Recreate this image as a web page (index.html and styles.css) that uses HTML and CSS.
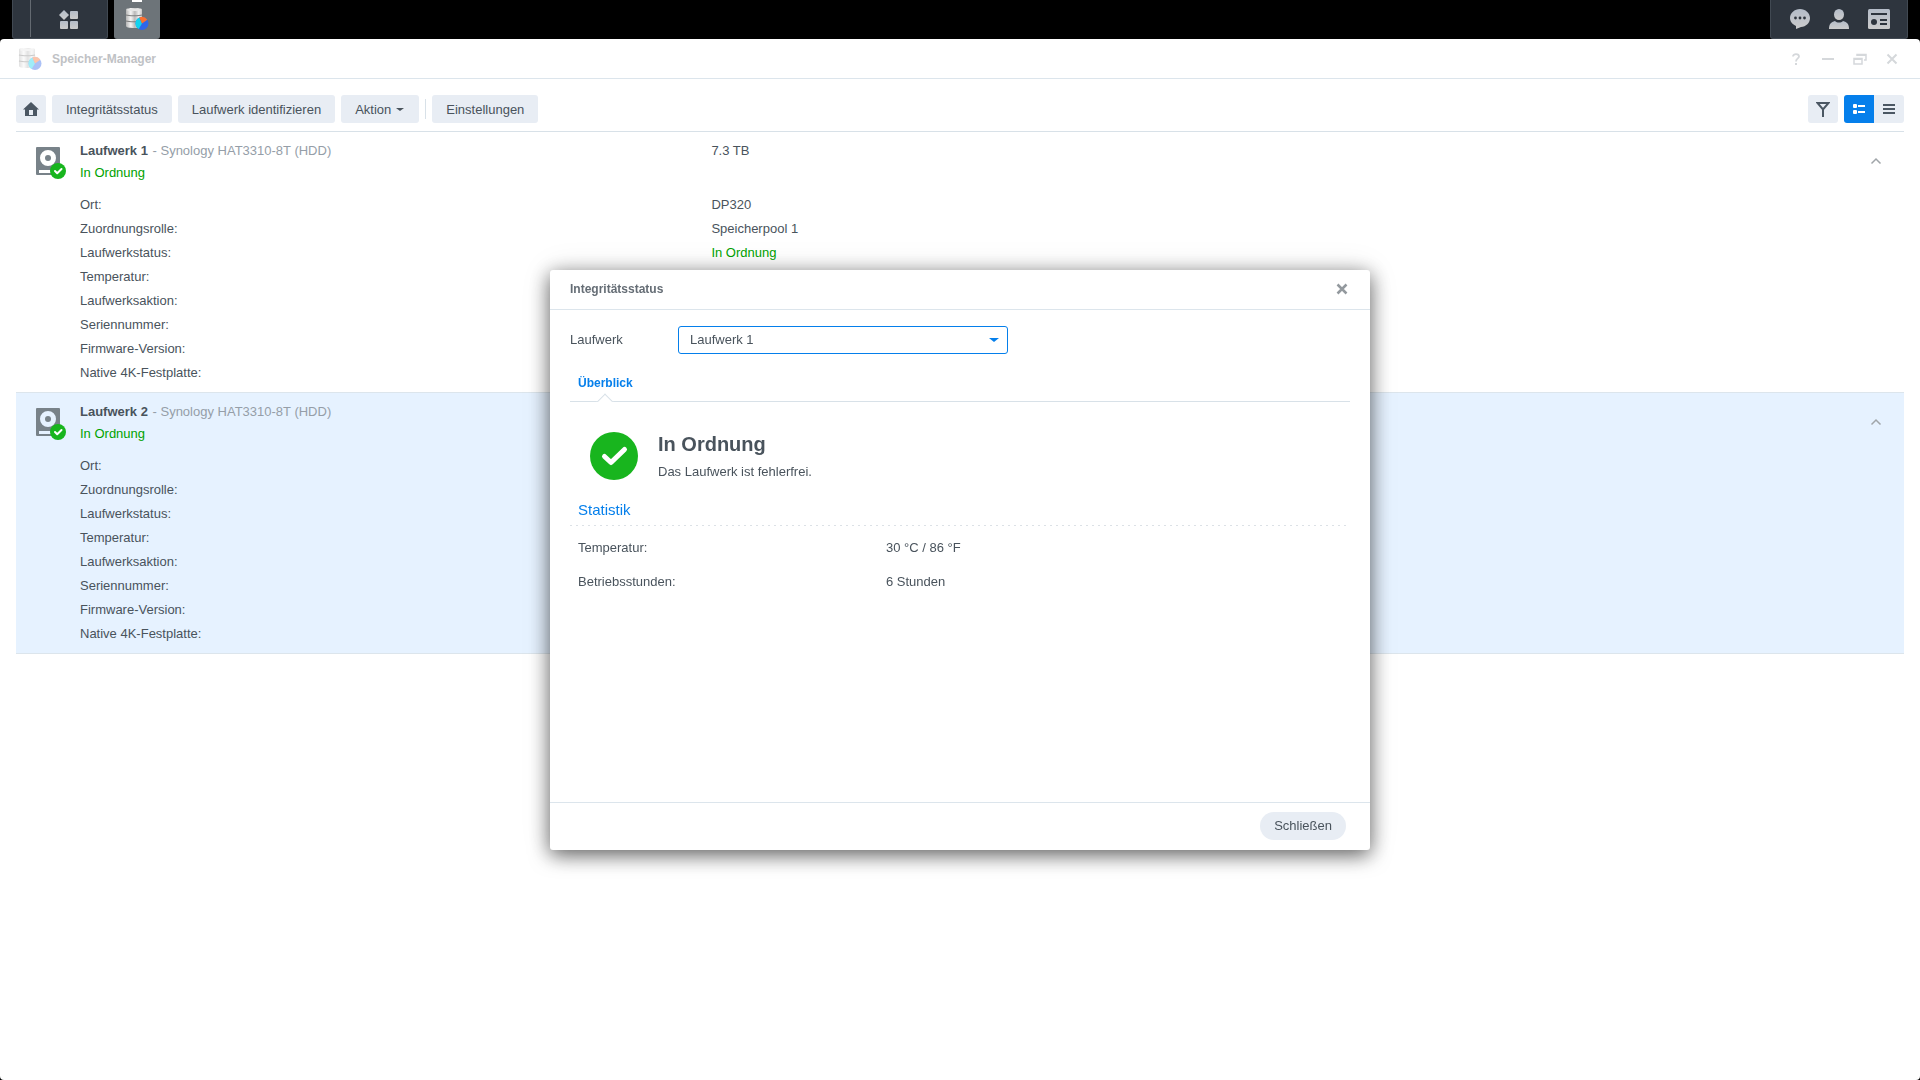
FILE: index.html
```html
<!DOCTYPE html>
<html lang="de">
<head>
    <meta charset="UTF-8">
    <meta name="viewport" content="width=device-width, initial-scale=1.0">
    <title>Speicher-Manager</title>
    <link rel="stylesheet" href="styles.css">
</head>
<body>
    <!-- shared symbols -->
    <svg class="symbols" aria-hidden="true">
        <defs>
            <linearGradient id="metal" x1="0" x2="1" y1="0" y2="0">
                <stop offset="0" stop-color="#b5b5b5"/>
                <stop offset="0.3" stop-color="#f5f5f5"/>
                <stop offset="0.55" stop-color="#b9b9b9"/>
                <stop offset="0.8" stop-color="#efefef"/>
                <stop offset="1" stop-color="#c4c4c4"/>
            </linearGradient>
            <linearGradient id="tray" x1="0" x2="0" y1="0" y2="1">
                <stop offset="0" stop-color="#b4bcc8"/>
                <stop offset="1" stop-color="#cccccc"/>
            </linearGradient>
        </defs>
        <symbol id="storage" viewBox="0 0 24 24">
            <path d="M1 2.500C1 1.500 4 1 9 1s8 .5 8 1.500V19c0 1.200-3 2-8 2s-8-.8-8-2z" fill="url(#metal)"/>
            <ellipse cx="9" cy="2.800" rx="7.500" ry="1.300" fill="#e6e6e6"/>
            <path d="M1 8c3 1 13 1 16 0M1 14c3 1 13 1 16 0" stroke="#7d7d7d" stroke-width="1.200" fill="none"/>
            <circle cx="17" cy="16.500" r="6.500" fill="#2f66ea"/>
            <path d="M17 16.500L14.300 10.600A6.500 6.500 0 0 0 13.700 22.100z" fill="#12d3ee"/>
            <path d="M17 16.500L14.300 10.600A6.500 6.500 0 0 1 22.300 12.800z" fill="#fa7130"/>
        </symbol>
        <symbol id="drive" viewBox="0 0 32 34">
            <path fill-rule="evenodd" fill="#788289" d="M1 0h22a1 1 0 0 1 1 1v26a1 1 0 0 1-1 1H1a1 1 0 0 1-1-1V1a1 1 0 0 1 1-1zM12 3a8 8 0 1 0 0 16 8 8 0 0 0 0-16zM3 23v3h12v-3z"/>
            <circle cx="12" cy="11" r="3" fill="#788289"/>
            <circle cx="22" cy="24" r="8" fill="#18b51e"/>
            <path d="M19 24l2.200 2.200L25.500 22" fill="none" stroke="#fff" stroke-width="2" stroke-linecap="round" stroke-linejoin="round"/>
        </symbol>
        <symbol id="up" viewBox="0 0 16 16">
            <path d="M3.500 9.500l4.500-4.500 4.500 4.500" fill="none" stroke="#a0a5a9" stroke-width="1.500"/>
        </symbol>
    </svg>

    <header class="taskbar">
        <div class="task-menu">
            <button class="task-apps" aria-label="Hauptmenü">
                <svg width="20" height="20" viewBox="0 0 20 20" fill="url(#tray)">
                    <path d="M5 0l5 5-5 5-5-5z"/>
                    <rect x="11" y="1" width="8" height="8" rx="1"/>
                    <rect x="1" y="11" width="8" height="8" rx="1"/>
                    <rect x="11" y="11" width="8" height="8" rx="1"/>
                </svg>
            </button>
        </div>
        <button class="task-item" aria-label="Speicher-Manager">
            <svg width="24" height="24"><use href="#storage"/></svg>
        </button>
        <div class="tray">
            <button aria-label="Benachrichtigungen">
                <svg width="20" height="20" viewBox="0 0 20 20">
                    <path d="M10 0c5.500 0 10 4 10 9s-4 8.600-9 9l-5 2v-3C2.500 15.500 0 12.500 0 9c0-5 4.500-9 10-9z" fill="url(#tray)"/>
                    <circle cx="5.500" cy="9" r="1.400" fill="#2e353e"/>
                    <circle cx="10" cy="9" r="1.400" fill="#2e353e"/>
                    <circle cx="14.500" cy="9" r="1.400" fill="#2e353e"/>
                </svg>
            </button>
            <button aria-label="Optionen">
                <svg width="20" height="20" viewBox="0 0 20 20" fill="url(#tray)">
                    <ellipse cx="10" cy="5.500" rx="5" ry="5.500"/>
                    <path d="M0 20c0-5 2-7 6-8 2 2 6 2 8 0 4 1 6 3 6 8z"/>
                </svg>
            </button>
            <button aria-label="Widgets">
                <svg width="22" height="20" viewBox="0 0 22 20">
                    <rect width="22" height="20" rx="1.500" fill="url(#tray)"/>
                    <path d="M3 5h16M12 11h7M12 15h7" stroke="#2e353e" stroke-width="2"/>
                    <circle cx="6" cy="13" r="3" fill="#2e353e"/>
                </svg>
            </button>
        </div>
    </header>

    <main class="window">
        <div class="window-header">
            <svg width="24" height="24"><use href="#storage"/></svg>
            <h1>Speicher-Manager</h1>
            <div class="window-tools">
                <button aria-label="Hilfe">
                    <svg width="12" height="12" viewBox="0 0 12 12"><path d="M3 3.500C3 .2 9 .2 9 3.500 9 5.500 6 5.300 6 8.500" fill="none" stroke="currentColor" stroke-width="1.800"/><path d="M5 10h2v2H5z" fill="currentColor"/></svg>
                </button>
                <button aria-label="Minimieren">
                    <svg width="12" height="12" viewBox="0 0 12 12"><path d="M0 6h12" stroke="currentColor" stroke-width="2"/></svg>
                </button>
                <button aria-label="Verkleinern">
                    <svg width="14" height="12" viewBox="0 0 14 12"><path d="M4 3V1.500h9V7h-2M1 5.500h8V11H1z" fill="none" stroke="currentColor" stroke-width="1.500"/><path d="M4 1h9v2H4zM1 5h8v2H1z" fill="currentColor"/></svg>
                </button>
                <button aria-label="Fenster schließen">
                    <svg width="12" height="12" viewBox="0 0 12 12"><path d="M1.500 1.500l9 9M10.500 1.500l-9 9" stroke="currentColor" stroke-width="2"/></svg>
                </button>
            </div>
        </div>

        <div class="content">
            <nav class="toolbar">
                <button class="btn btn-icon" aria-label="Startseite">
                    <svg width="16" height="14" viewBox="0 0 16 14"><path fill="#4b5763" fill-rule="evenodd" d="M8 0l8 7.500h-2V14H2V7.500H0zM6 8v5h4V8z"/></svg>
                </button>
                <button class="btn">Integritätsstatus</button>
                <button class="btn">Laufwerk identifizieren</button>
                <button class="btn">Aktion<span class="caret"></span></button>
                <span class="separator"></span>
                <button class="btn">Einstellungen</button>
                <div class="toolbar-right">
                    <button class="btn btn-icon" aria-label="Filter">
                        <svg width="14" height="15" viewBox="0 0 14 15"><path d="M1.500 1h11L7 7.500zM7 7v8" fill="none" stroke="#4b5763" stroke-width="2"/></svg>
                    </button>
                    <div class="toggle">
                        <button class="btn btn-icon active" aria-label="Detailansicht">
                            <svg width="12" height="10" viewBox="0 0 12 10" fill="#fff"><rect width="4" height="4" rx="1"/><rect y="6" width="4" height="4" rx="1"/><rect x="5" y="1" width="7" height="2"/><rect x="5" y="7" width="7" height="2"/></svg>
                        </button>
                        <button class="btn btn-icon" aria-label="Listenansicht">
                            <svg width="12" height="10" viewBox="0 0 12 10"><path d="M0 1h12M0 5h12M0 9h12" stroke="#4b5763" stroke-width="2"/></svg>
                        </button>
                    </div>
                </div>
            </nav>

            <section class="drive">
                <svg class="drive-icon" width="32" height="34"><use href="#drive"/></svg>
                <div class="drive-body">
                    <div class="drive-header">
                        <div>
                            <h2>Laufwerk 1 <span class="model">- Synology HAT3310-8T (HDD)</span></h2>
                            <p class="ok">In Ordnung</p>
                        </div>
                        <span>7.3 TB</span>
                        <button class="collapse" aria-label="Laufwerk 1 einklappen"><svg width="16" height="16"><use href="#up"/></svg></button>
                    </div>
                    <dl class="details">
                        <dt>Ort:</dt><dd>DP320</dd>
                        <dt>Zuordnungsrolle:</dt><dd>Speicherpool 1</dd>
                        <dt>Laufwerkstatus:</dt><dd class="ok">In Ordnung</dd>
                        <dt>Temperatur:</dt><dd></dd>
                        <dt>Laufwerksaktion:</dt><dd></dd>
                        <dt>Seriennummer:</dt><dd></dd>
                        <dt>Firmware-Version:</dt><dd></dd>
                        <dt>Native 4K-Festplatte:</dt><dd></dd>
                    </dl>
                </div>
            </section>

            <section class="drive selected">
                <svg class="drive-icon" width="32" height="34"><use href="#drive"/></svg>
                <div class="drive-body">
                    <div class="drive-header">
                        <div>
                            <h2>Laufwerk 2 <span class="model">- Synology HAT3310-8T (HDD)</span></h2>
                            <p class="ok">In Ordnung</p>
                        </div>
                        <span></span>
                        <button class="collapse" aria-label="Laufwerk 2 einklappen"><svg width="16" height="16"><use href="#up"/></svg></button>
                    </div>
                    <dl class="details">
                        <dt>Ort:</dt><dd></dd>
                        <dt>Zuordnungsrolle:</dt><dd></dd>
                        <dt>Laufwerkstatus:</dt><dd></dd>
                        <dt>Temperatur:</dt><dd></dd>
                        <dt>Laufwerksaktion:</dt><dd></dd>
                        <dt>Seriennummer:</dt><dd></dd>
                        <dt>Firmware-Version:</dt><dd></dd>
                        <dt>Native 4K-Festplatte:</dt><dd></dd>
                    </dl>
                </div>
            </section>
        </div>
    </main>

    <div class="overlay">
        <div class="dialog" role="dialog" aria-labelledby="dialog-title">
            <div class="dialog-header">
                <h2 id="dialog-title">Integritätsstatus</h2>
                <button class="dialog-close" aria-label="Dialog schließen">
                    <svg width="12" height="12" viewBox="0 0 12 12"><path d="M1.500 1.500l9 9M10.500 1.500l-9 9" stroke="currentColor" stroke-width="2.500"/></svg>
                </button>
            </div>
            <div class="dialog-body">
                <div class="field">
                    <label for="laufwerk">Laufwerk</label>
                    <div class="select">
                        <select id="laufwerk">
                            <option>Laufwerk 1</option>
                            <option>Laufwerk 2</option>
                        </select>
                    </div>
                </div>
                <div class="tabs">
                    <button class="tab">Überblick</button>
                </div>
                <div class="status">
                    <svg width="48" height="48" viewBox="0 0 48 48">
                        <circle cx="24" cy="24" r="24" fill="#18b51e"/>
                        <path d="M14.500 24.500l6.500 6L34.500 17.500" fill="none" stroke="#fff" stroke-width="5" stroke-linecap="round" stroke-linejoin="round"/>
                    </svg>
                    <div>
                        <h3>In Ordnung</h3>
                        <p>Das Laufwerk ist fehlerfrei.</p>
                    </div>
                </div>
                <h4 class="stats-title">Statistik</h4>
                <dl class="stats">
                    <dt>Temperatur:</dt><dd>30 °C / 86 °F</dd>
                    <dt>Betriebsstunden:</dt><dd>6 Stunden</dd>
                </dl>
            </div>
            <div class="dialog-footer">
                <button class="btn btn-round">Schließen</button>
            </div>
        </div>
    </div>
</body>
</html>
```

FILE: styles.css
```css
* {
    box-sizing: border-box;
    margin: 0;
    padding: 0;
}
body {
    display: flex;
    flex-direction: column;
    min-height: 100vh;
    background-color: #000;
    color: #49535c;
    font-family: "Liberation Sans", Arial, sans-serif;
    font-size: 13px;
    line-height: 20px;
}
button {
    border: none;
    background: none;
    color: inherit;
    font: inherit;
    cursor: pointer;
}
svg {
    display: block;
}
.symbols {
    position: absolute;
    width: 0;
    height: 0;
}

/* Taskbar */
.taskbar {
    display: flex;
    height: 39px;
    padding: 0 12px;
}
.task-menu,
.tray {
    display: flex;
    background-color: #2e353e;
    border: 1px solid #414952;
    border-top: none;
    border-radius: 0 0 3px 3px;
}
.task-menu {
    width: 96px;
    padding-left: 17px;
    margin-right: 6px;
}
.task-apps {
    flex: 1;
    display: flex;
    justify-content: center;
    padding-top: 10px;
    margin-bottom: 1px;
    border-left: 1px solid #646a71;
}
.task-item {
    position: relative;
    width: 46px;
    padding: 7px 11px 8px;
    background-color: #6d7479;
    border-radius: 0 0 3px 3px;
}
.task-item::before {
    content: "";
    position: absolute;
    top: 0;
    left: 18px;
    width: 10px;
    height: 2px;
    background-color: #fff;
}
.tray {
    gap: 19px;
    align-items: center;
    padding: 0 17px 0 19px;
    margin-left: auto;
}

/* Window */
.window {
    flex: 1;
    background-color: #fff;
    border-radius: 4px;
}
.window-header {
    display: flex;
    align-items: center;
    height: 40px;
    padding: 0 16px 0 18px;
    border-bottom: 1px solid #dce5ec;
}
.window-header > svg {
    opacity: 0.4;
}
.window-header h1 {
    margin-left: 10px;
    color: #bfc2c5;
    font-size: 12px;
}
.window-tools {
    display: flex;
    gap: 8px;
    margin-left: auto;
    color: #d5d8db;
}
.window-tools button {
    display: flex;
    justify-content: center;
    width: 24px;
}
.content {
    padding: 0 16px;
}

/* Toolbar */
.toolbar {
    display: flex;
    gap: 6px;
    padding: 16px 0 8px;
    border-bottom: 1px solid #d8e1e8;
}
.btn {
    height: 28px;
    padding: 0 14px;
    background-color: #e8edf4;
    border-radius: 3px;
    white-space: nowrap;
}
.toolbar .btn {
    padding-top: 1px;
}
.btn:hover {
    background-color: #dde5ee;
}
.toolbar .btn-icon {
    display: flex;
    align-items: center;
    justify-content: center;
    width: 30px;
    padding: 0;
}
.caret {
    display: inline-block;
    margin: 0 1px 3px 5px;
    border: 4px solid transparent;
    border-top-color: #49535c;
    border-bottom: none;
    border-top-width: 3px;
}
.separator {
    width: 1px;
    margin: 4px 0;
    background-color: #d8e1e8;
}
.toolbar-right {
    display: flex;
    gap: 6px;
    margin-left: auto;
}
.toggle {
    display: flex;
    overflow: hidden;
    border-radius: 3px;
}
.toggle .btn {
    border-radius: 0;
}
.toggle .active {
    background-color: #057feb;
}

/* Drives */
.drive {
    display: flex;
    padding: 8px 20px 7px;
    border-bottom: 1px solid #dce5ec;
}
.drive.selected {
    background-color: #e6f2ff;
}
.drive-icon {
    flex: none;
    margin: 7px 12px 0 0;
}
.drive-body {
    flex: 1;
}
.drive-header {
    display: grid;
    grid-template-columns: 35% 1fr 16px;
    margin-bottom: 9px;
    line-height: 22px;
}
.drive-header h2 {
    font-size: 13px;
}
.model {
    margin-left: 1px;
    color: #959ea8;
    font-weight: normal;
}
.ok {
    color: #00a200;
}
.collapse {
    align-self: center;
}
.details {
    display: grid;
    grid-template-columns: 35% 1fr;
    line-height: 24px;
}

/* Dialog */
.overlay {
    position: fixed;
    inset: 40px 0 0;
    display: flex;
    align-items: center;
    justify-content: center;
}
.dialog {
    display: flex;
    flex-direction: column;
    width: 820px;
    min-height: 580px;
    background-color: #fff;
    border-radius: 3px;
    box-shadow: 0 5px 20px rgba(0, 0, 0, 0.6), 0 0 32px rgba(0, 0, 0, 0.1);
}
.dialog-header {
    display: flex;
    align-items: center;
    justify-content: space-between;
    height: 40px;
    padding: 0 20px 1px;
    border-bottom: 1px solid #dce5ec;
}
.dialog-header h2 {
    color: #656d75;
    font-size: 12px;
}
.dialog-close {
    padding: 2px;
    color: #93999e;
}
.dialog-body {
    flex: 1;
    padding: 16px 20px;
}
.field {
    display: flex;
    align-items: center;
}
.field label {
    width: 108px;
}
.select {
    position: relative;
    width: 330px;
}
.select::after {
    content: "";
    position: absolute;
    top: 12px;
    right: 9px;
    border: 5px solid transparent;
    border-top: 4px solid #057feb;
    border-bottom: none;
    pointer-events: none;
}
.select select {
    appearance: none;
    width: 100%;
    height: 28px;
    padding: 0 11px;
    background-color: #fff;
    border: 1px solid #057feb;
    border-radius: 3px;
    color: inherit;
    font: inherit;
    outline: none;
}
.tabs {
    height: 48px;
    padding: 18px 8px 0;
    border-bottom: 1px solid #d8e1e8;
}
.tab {
    position: relative;
    height: 30px;
    padding-bottom: 8px;
    color: #057feb;
    font-size: 12px;
    font-weight: bold;
}
.tab::after {
    content: "";
    position: absolute;
    bottom: -6px;
    left: calc(50% - 6px);
    width: 10px;
    height: 10px;
    background-color: #fff;
    border: 1px solid #d8e1e8;
    border-right-color: transparent;
    border-bottom-color: transparent;
    transform: rotate(45deg);
}
.status {
    display: flex;
    gap: 20px;
    padding: 30px 20px 0;
}
.status h3 {
    font-size: 20px;
    line-height: 24px;
}
.status p {
    margin-top: 6px;
}
.stats-title {
    padding: 18px 8px 6px;
    background: repeating-linear-gradient(to right, #dce1e6 0 2px, transparent 2px 6px) bottom / 100% 1px no-repeat;
    color: #057feb;
    font-size: 15px;
    font-weight: normal;
}
.stats {
    display: grid;
    grid-template-columns: 308px 1fr;
    padding: 5px 8px;
    line-height: 34px;
}
.dialog-footer {
    display: flex;
    justify-content: flex-end;
    padding: 9px 24px 10px;
    border-top: 1px solid #dce5ec;
}
.btn-round {
    border-radius: 14px;
}
```
